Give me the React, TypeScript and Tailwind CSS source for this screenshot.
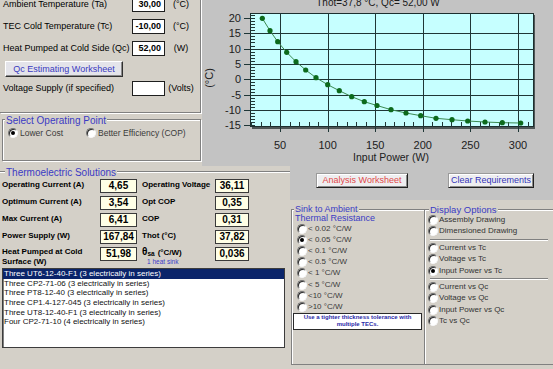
import React from 'react';

const snap = (n: number) => Math.round(n) + 0.5;
const yPx = (v: number) => 79.3 - 3.07 * v;
const xPx = (v: number) => 280 + (v - 50) * 0.952;

const points: [number, number][] = [
  [262.3, 18.3], [270, 30.7], [277.7, 41.7], [286.7, 52.3], [296, 61.7], [305.7, 70],
  [316, 77.7], [327.7, 84.7], [339.3, 90.7], [351.7, 96.7], [364.3, 101.7], [377, 105.5],
  [391, 109.7], [406, 113], [420.7, 115.7], [436, 118.3], [452, 119.7], [467.7, 121],
  [485, 122], [502.3, 122.7], [520.7, 123],
];

const modules = [
  'Three UT6-12-40-F1 (3 electrically in series)',
  'Three CP2-71-06 (3 electrically in series)',
  'Three PT8-12-40 (3 electrically in series)',
  'Three CP1.4-127-045 (3 electrically in series)',
  'Three UT8-12-40-F1 (3 electrically in series)',
  'Four CP2-71-10 (4 electrically in series)',
];

const sinkOptions = ['< 0.02 °C/W', '< 0.05 °C/W', '< 0.1 °C/W', '< 0.5 °C/W', '< 1 °C/W', '< 5 °C/W', '<10 °C/W', '>10 °C/W'];

function Radio({ on = false }: { on?: boolean }) {
  return (
    <span className="flex h-[10px] w-[10px] shrink-0 items-center justify-center rounded-full border border-t-[#707070] border-l-[#707070] border-r-[#f8f8f8] border-b-[#f8f8f8] bg-white shadow-[inset_1px_1px_0_#2a2a2a]">
      {on && <span className="h-[4px] w-[4px] rounded-full bg-black" />}
    </span>
  );
}

function InputRow({ label, value, unit, className = '' }: { label: string; value: string; unit: string; className?: string }) {
  return (
    <div className={`flex h-[15px] items-center ${className}`}>
      <span className="w-[132px] pl-[3px] text-[9px] leading-none">{label}</span>
      <span className="flex h-full w-[33px] items-center justify-end border border-[#1e1e1e] bg-white pr-[3px] text-[9px] font-bold leading-none">
        {value}
      </span>
      <span className="w-[32px] text-center text-[9px] leading-none">{unit}</span>
    </div>
  );
}

function Val({ children, w }: { children: React.ReactNode; w: string }) {
  return (
    <div className={`flex h-[14px] ${w} shrink-0 items-center justify-center border border-[#3a3a3a] bg-[#ffffe6] text-[10px] font-bold leading-none`}>
      {children}
    </div>
  );
}

function SolRow({ l1, v1, l2, v2 }: { l1: string; v1: string; l2: string; v2: string }) {
  return (
    <div className="flex h-[17px] items-start">
      <div className="w-[100px] pl-[2px] pt-[1px] text-[8px] font-bold leading-[9px]">{l1}</div>
      <Val w="w-[37px]">{v1}</Val>
      <div className="ml-[5px] w-[73px] pt-[1px] text-[8px] font-bold leading-[9px]">{l2}</div>
      <Val w="w-[34px]">{v2}</Val>
    </div>
  );
}

function WinButton({ children, className = '' }: { children: React.ReactNode; className?: string }) {
  return (
    <button className={`block h-[15px] border border-t-[#9a9a9a] border-l-[#9a9a9a] border-r-[#202020] border-b-[#202020] bg-[#eeeef0] text-[9px] leading-none shadow-[inset_1px_1px_0_#fff,inset_-1px_-1px_0_#8a8a8a] ${className}`}>
      {children}
    </button>
  );
}

function Chart() {
  const grid = [15, 10, 5, 0, -5, -10];
  const yLabels = [20, 15, 10, 5, 0, -5, -10, -15];
  const xLabels = [50, 100, 150, 200, 250, 300];
  const minorY = Array.from({ length: 37 }, (_, i) => i - 15);
  const minorX = Array.from({ length: 30 }, (_, i) => 20 + i * 10);
  return (
    <svg width="351" height="166" viewBox="202 0 351 166" className="block">
      <text x="378" y="6" fontSize="10" textAnchor="middle" fill="#1a1a1a">Thot=37,8 °C, Qc= 52,00 W</text>
      <rect x="252" y="15" width="283" height="114" fill="#4e5656" />
      <rect x="250.5" y="13.5" width="283" height="113" fill="#c6ffff" stroke="#1c2e2e" />
      {grid.map((v) => (
        <line key={v} x1="250" x2="534" y1={snap(yPx(v))} y2={snap(yPx(v))} stroke="#1f3636" />
      ))}
      {xLabels.map((v) => (
        <line key={v} x1={snap(xPx(v))} x2={snap(xPx(v))} y1="13" y2="132" stroke="#1f3636" />
      ))}
      {minorY.map((v) => (
        <line key={v} x1={v % 5 === 0 ? 244 : 250} x2="255" y1={snap(yPx(v))} y2={snap(yPx(v))} stroke="#1f3636" />
      ))}
      {minorX.map((v) => (
        <line key={v} x1={snap(xPx(v))} x2={snap(xPx(v))} y1="122" y2="127" stroke="#1f3636" />
      ))}
      <polyline points={points.map((p) => p.join(',')).join(' ')} fill="none" stroke="#3a8a50" strokeWidth="1" />
      {points.map(([x, y], i) => (
        <circle key={i} cx={x} cy={y} r="2.6" fill="#0c6a1c" />
      ))}
      {yLabels.map((v) => (
        <text key={v} x="241" y={yPx(v)} dy="0.36em" fontSize="11" textAnchor="end" fill="#202020">{v}</text>
      ))}
      {xLabels.map((v) => (
        <text key={v} x={xPx(v)} y="145" dy="0.36em" fontSize="11" textAnchor="middle" fill="#202020">{v}</text>
      ))}
      <text x="391" y="157" dy="0.36em" fontSize="10.5" textAnchor="middle" fill="#202020">Input Power (W)</text>
      <text x="209" y="78" dy="0.36em" fontSize="11" textAnchor="middle" fill="#202020" transform="rotate(-90 209 78)">(°C)</text>
    </svg>
  );
}

export default function App() {
  return (
    <div className="h-[369px] w-[553px] overflow-hidden bg-[#d4d0c8] font-['Liberation_Sans',Arial,sans-serif] text-black">
      {/* top: inputs + chart */}
      <div className="flex h-[166px]">
        <div className="w-[202px] bg-[#d4d0c8]">
          <div className="h-[116px] w-[201px] border-r border-b border-[#808080] shadow-[1px_1px_0_#fff]">
            <InputRow className="-mt-[3px]" label="Ambient Temperature (Ta)" value="30,00" unit="(°C)" />
            <InputRow className="mt-[7px]" label="TEC Cold Temperature (Tc)" value="-10,00" unit="(°C)" />
            <InputRow className="mt-[7px]" label="Heat Pumped at Cold Side (Qc)" value="52,00" unit="(W)" />
            <button className="ml-[5px] mt-[5px] block h-[16px] w-[118px] border border-t-[#fff] border-l-[#fff] border-r-[#303030] border-b-[#303030] bg-[#e4e4ea] text-[9px] leading-none text-[#3a3abf] shadow-[inset_-1px_-1px_0_#8a8a8a]">
              Qc Estimating Worksheet
            </button>
            <InputRow className="mt-[4px]" label="Voltage Supply (if specified)" value="" unit="(Volts)" />
          </div>

          <div className="ml-[2px] mt-[6px] h-[42px] w-[199px] border border-[#808080] shadow-[inset_1px_1px_0_#fff,1px_1px_0_#fff]">
            <div className="-mt-[5px] ml-[2px] w-fit bg-[#d4d0c8] px-[1px] text-[10px] leading-[12px] text-[#3b3bc4]">Select Operating Point</div>
            <div className="flex h-[12px] items-center pl-[5px] text-[8.5px] leading-none text-[#3a3a3a]">
              <div className="flex w-[78px] items-center gap-[2px]">
                <Radio on />
                Lower Cost
              </div>
              <div className="flex items-center gap-[2px]">
                <Radio />
                Better Efficiency (COP)
              </div>
            </div>
          </div>
        </div>

        <div className="w-[351px] bg-[#c3c3c3]">
          <Chart />
        </div>
      </div>

      {/* bottom: solutions + options */}
      <div className="flex h-[203px]">
        <div className="h-[203px] w-[290px] bg-[#d4d0c8]">
          <div className="mt-[5px] border-t border-[#808080] shadow-[inset_0_1px_0_#fff]">
            <div className="-mt-[5px] ml-[5px] w-fit bg-[#d4d0c8] px-[1px] text-[10px] leading-[12px] text-[#3b3bc4]">Thermoelectric Solutions</div>
            <SolRow l1="Operating Current (A)" v1="4,65" l2="Operating Voltage" v2="36,11" />
            <SolRow l1="Optimum Current (A)" v1="3,54" l2="Opt COP" v2="0,35" />
            <SolRow l1="Max Current (A)" v1="6,41" l2="COP" v2="0,31" />
            <SolRow l1="Power Supply (W)" v1="167,84" l2="Thot (°C)" v2="37,82" />
            <div className="flex h-[21px] items-start">
              <div className="w-[100px] pl-[2px] text-[8px] font-bold leading-[10px]">
                Heat Pumped at Cold
                <br />
                Surface (W)
              </div>
              <Val w="w-[37px]">51,98</Val>
              <div className="ml-[5px] w-[73px] leading-none">
                <div className="flex h-[10px] items-end font-bold">
                  <span className="text-[10px]">θ</span>
                  <span className="text-[6.5px]">sa</span>
                  <span className="ml-[3px] text-[8px]">(°C/W)</span>
                </div>
                <div className="pl-[5px] text-[6.5px] leading-[10px] text-[#3a3ac8]">1 heat sink</div>
              </div>
              <Val w="w-[34px]">0,036</Val>
            </div>

            <div className="ml-[2px] h-[80px] w-[283px] border border-[#3c3c3c] bg-white shadow-[inset_1px_1px_0_#808080]">
              {modules.map((m, i) => (
                <div
                  key={m}
                  className={`h-[9.7px] pl-[1px] text-[8px] leading-[9.7px] ${i === 0 ? 'bg-[#0a246a] text-white' : 'text-[#111]'}`}
                >
                  {m}
                </div>
              ))}
            </div>
          </div>
        </div>

        <div className="flex w-[263px] flex-col">
          <div className="flex h-[34px] items-start bg-[#c3c3c3] pt-[7px]">
            <WinButton className="ml-[26px] w-[92px] text-[#e04848]">Analysis Worksheet</WinButton>
            <WinButton className="ml-[40px] w-[86px] text-[#3434b8]">Clear Requirements</WinButton>
          </div>

          <div className="flex flex-1 bg-[#d4d0c8] pl-[1px] pt-[9px]">
            <div className="h-[156px] w-[134px] border border-[#808080] shadow-[inset_1px_1px_0_#fff]">
              <div className="-mt-[5px] ml-[2px] w-fit bg-[#d4d0c8] px-[1px] text-[9px] leading-[9px] text-[#3b3bc4]">Sink to Ambient</div>
              <div className="ml-[3px] text-[9px] leading-[9px] text-[#3b3bc4]">Thermal Resistance</div>
              {sinkOptions.map((s, i) => (
                <div key={s} className="flex h-[11.2px] items-center gap-[1px] pl-[5px] text-[8px] leading-none text-[#3a3a3a]">
                  <Radio on={i === 1} />
                  {s}
                </div>
              ))}
              <div className="ml-[1px] flex h-[17px] w-[129px] flex-col items-center justify-center border border-[#2a2a2a] bg-white text-[6px] font-bold leading-[7.5px] text-[#2a2aa8]">
                <span>Use a tighter thickness tolerance with</span>
                <span>multiple TECs.</span>
              </div>
            </div>

            <div className="h-[156px] flex-1 border-t border-b border-[#808080] shadow-[inset_1px_1px_0_#fff]">
              <div className="-mt-[5px] ml-[4px] w-fit bg-[#d4d0c8] px-[1px] text-[9.5px] leading-[9px] text-[#3b3bc4]">Display Options</div>
              {['Assembly Drawing', 'Dimensioned Drawing'].map((s) => (
                <div key={s} className="flex h-[11.5px] items-center gap-[1px] pl-[3px] text-[8px] leading-none text-[#333]">
                  <Radio />
                  {s}
                </div>
              ))}
              <div className="mb-[1.25px] ml-[5px] mt-[1.5px] h-[2px] w-[118px] border-t border-b border-t-[#808080] border-b-white" />
              {['Current vs Tc', 'Voltage vs Tc', 'Input Power vs Tc'].map((s, i) => (
                <div key={s} className="flex h-[11.5px] items-center gap-[1px] pl-[3px] text-[8px] leading-none text-[#333]">
                  <Radio on={i === 2} />
                  {s}
                </div>
              ))}
              <div className="mb-[1.25px] ml-[5px] mt-[1.5px] h-[2px] w-[118px] border-t border-b border-t-[#808080] border-b-white" />
              {['Current vs Qc', 'Voltage vs Qc', 'Input Power vs Qc', 'Tc vs Qc'].map((s) => (
                <div key={s} className="flex h-[11.5px] items-center gap-[1px] pl-[3px] text-[8px] leading-none text-[#333]">
                  <Radio />
                  {s}
                </div>
              ))}
            </div>
          </div>
        </div>
      </div>
    </div>
  );
}
